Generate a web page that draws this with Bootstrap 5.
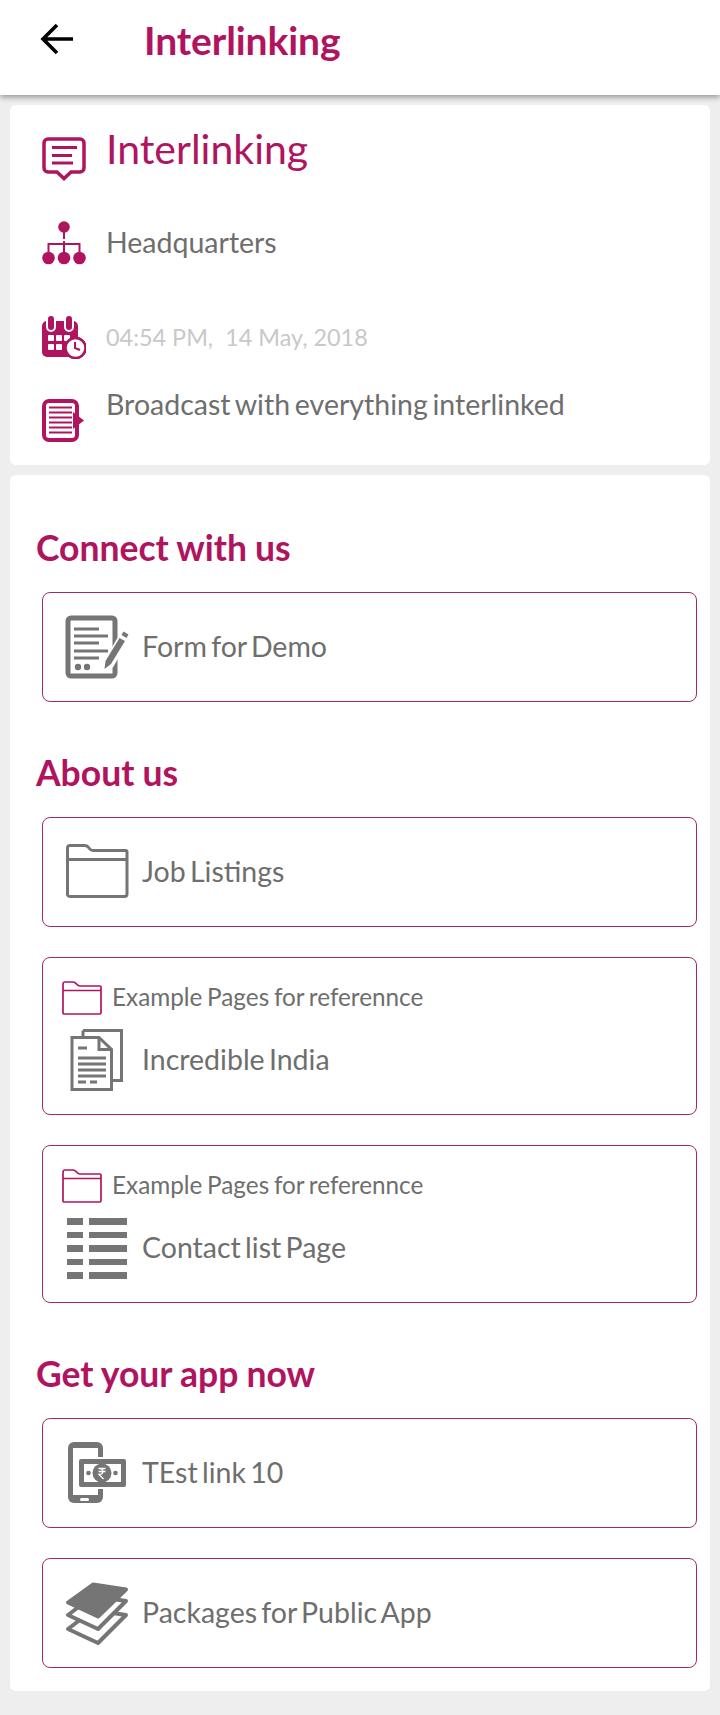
<!DOCTYPE html>
<html lang="en">
<head>
    <meta charset="UTF-8">
    <meta name="viewport" content="width=device-width, initial-scale=1.0">
    <title>Interlinking</title>
    <link href="https://cdn.jsdelivr.net/npm/bootstrap@5.3.0/dist/css/bootstrap.min.css" rel="stylesheet">
    <style>
        body { background-color: #eeeeee; font-family: Lato, "Liberation Sans", sans-serif; color: #6e6e6e; }
        .top-bar { height: 95px; background: #fff; box-shadow: 0 2px 6px rgba(0, 0, 0, .4); padding: 20px 0 0 39px; position: relative; }
        .top-title { font-size: 39px; font-weight: 700; color: #b0145f; margin-left: 67px; line-height: 40px; letter-spacing: -.1px; }
        .panel { background: #fff; border-radius: 6px; margin: 0 10px; }
        .panel-info { margin-top: 10px; height: 360px; padding: 24px 0 0 32px; }
        .panel-links { margin-top: 10px; padding: 53px 13px 23px 26px; }
        .info-text { margin-left: 20px; font-size: 28.5px; line-height: 40px; word-spacing: -2.5px; }
        .info-title { font-size: 41px; color: #b0145f; }
        .info-date { font-size: 23.4px; color: #c8c8c8; word-spacing: 0; }
        .row-title { height: 72px; }
        .row-org { height: 56px; margin-top: 14px; }
        .row-org .info-text { padding-bottom: 2px; }
        .row-date { height: 56px; margin-top: 38px; }
        .row-desc { margin-top: 19px; }
        .shift-8 { margin-top: 8px; }
        .shift-15 { margin-top: 15px; }
        .group-head { font-size: 35.5px; font-weight: 700; color: #b0145f; line-height: 40px; margin: 0 0 24px; word-spacing: -.5px; }
        .group-head-next { margin-top: 51px; }
        .link-box { --bs-border-color: #9e2a6a; border-radius: 8px; margin-left: 6px; background: #fff; color: #6e6e6e; font-size: 28.5px; line-height: 36px; word-spacing: -3px; padding-left: 12px; }
        .link-box + .link-box { margin-top: 30px; }
        .box-single { height: 110px; }
        .box-double { height: 158px; padding-top: 20px; }
        .crumb { height: 40px; margin-left: 7px; font-size: 24.3px; gap: 10px; word-spacing: -1.5px; }
        .crumb span { padding-bottom: 2px; }
        .crumb-next { margin-top: 11px; }
        .link-label { margin-left: 7px; padding-bottom: 2px; }
    </style>
</head>
<body>
    <div class="top-bar d-flex align-items-start">
        <svg width="38" height="38" viewBox="0 0 38 38" fill="none" stroke="#000" stroke-width="3.6"><path d="M34 19H5M18 5L4 19l14 14"/></svg>
        <div class="top-title">Interlinking</div>
    </div>

    <div class="panel panel-info">
        <div class="d-flex align-items-start row-title">
            <svg class="shift-8" width="44" height="44" viewBox="0 0 44 44" fill="none" stroke="#b0145f" stroke-width="3.500"><path d="M6 2h32a4 4 0 0 1 4 4v25a4 4 0 0 1-4 4h-9l-7 6.500-7-6.500H6a4 4 0 0 1-4-4V6a4 4 0 0 1 4-4z"/><path d="M10 10.500h25M10 18.500h20M10 26h21" stroke-width="3"/></svg>
            <div class="info-text info-title">Interlinking</div>
        </div>
        <div class="d-flex align-items-center row-org">
            <svg width="44" height="44" viewBox="0 0 44 44" fill="#b0145f" stroke="none"><circle cx="22" cy="6" r="5.800"/><circle cx="6.500" cy="37" r="6.300"/><circle cx="22" cy="37" r="6.300"/><circle cx="37.500" cy="37" r="6.300"/><path d="M22 11v7M6.500 31v-8h31v8M22 20v11" fill="none" stroke="#b0145f" stroke-width="2"/></svg>
            <div class="info-text">Headquarters</div>
        </div>
        <div class="d-flex align-items-center row-date">
            <svg width="44" height="44" viewBox="0 0 44 44"><rect x="0" y="6" width="36" height="36" rx="5" fill="#b0145f"/><g fill="#b0145f" stroke="#fff" stroke-width="2"><rect x="5" y="0" width="8" height="16" rx="4"/><rect x="23" y="0" width="8" height="16" rx="4"/></g><g fill="#fff"><rect x="6" y="20" width="6" height="6" rx="1"/><rect x="14" y="20" width="6" height="6" rx="1"/><rect x="22" y="20" width="6" height="6" rx="1"/><rect x="6" y="29" width="6" height="6" rx="1"/><rect x="14" y="29" width="6" height="6" rx="1"/></g><circle cx="33.500" cy="33" r="10" fill="#fff" stroke="#b0145f" stroke-width="2.500"/><circle cx="33.500" cy="33" r="10.800" fill="none" stroke="#b0145f" stroke-width="1"/><path d="M33 27v6l5 2" fill="none" stroke="#b0145f" stroke-width="2"/></svg>
            <div class="info-text info-date">04:54 PM,&nbsp; 14 May, 2018</div>
        </div>
        <div class="d-flex align-items-start row-desc">
            <svg class="shift-15" width="44" height="44" viewBox="0 0 44 44" fill="none" stroke="#b0145f"><rect x="2" y="2" width="33" height="39" rx="5" stroke-width="4"/><path d="M7 8.500h23M7 13.500h23M7 18.500h23M7 23.500h23M7 28.500h23M7 33.500h23" stroke-width="2"/><path d="M31 13l11 8.500-11 8.500z" fill="#b0145f" stroke="none"/></svg>
            <div class="info-text">Broadcast with everything interlinked</div>
        </div>
    </div>

    <div class="panel panel-links">
        <h2 class="group-head">Connect with us</h2>
        <div class="link-box box-single border d-flex align-items-center">
            <svg width="80" height="80" viewBox="0 2 80 80" fill="none" stroke="#757575"><rect x="13" y="13" width="47" height="58" rx="3" stroke-width="5"/><path d="M19 24h25M19 31h34M19 38h25M19 46h34M19 53h25" stroke-width="3"/><circle cx="23" cy="62" r="3.200" fill="#757575" stroke="none"/><circle cx="32" cy="62" r="3.200" fill="#757575" stroke="none"/><path d="M53 60l14-24" stroke="#fff" stroke-width="11"/><path d="M49.500 64l1-8 14-23 5.500 3-14 23z" fill="#757575" stroke="none"/><path d="M66.500 30l2-3.500 5 3-2 3.500z" fill="#757575" stroke="none"/></svg>
            <span class="link-label">Form for Demo</span>
        </div>

        <h2 class="group-head group-head-next">About us</h2>
        <div class="link-box box-single border d-flex align-items-center">
            <svg width="80" height="80" viewBox="0 0 80 80" fill="none" stroke="#757575" stroke-width="3"><path d="M12.500 63V16a2.500 2.500 0 0 1 2.500-2.500h15c2 0 3 1 4 2.500 1 1.500 2 2.500 4 2.500h32.500a1.500 1.500 0 0 1 1.500 1.500V62a2.500 2.500 0 0 1-2.500 2.500H15a2.500 2.500 0 0 1-2.500-1.500z"/><path d="M12.500 27.500h59"/></svg>
            <span class="link-label">Job Listings</span>
        </div>
        <div class="link-box box-double border">
            <div class="crumb d-flex align-items-center">
                <svg width="40" height="34" viewBox="0 0 40 34" fill="none" stroke="#b0145f" stroke-width="1.700"><path d="M1 31V3a2 2 0 0 1 2-2h8c2 0 2.500.7 3.500 2s1.500 2 3.500 2h20a1 1 0 0 1 1 1v25.500a1.500 1.500 0 0 1-1.500 1.500H2.500A1.500 1.500 0 0 1 1 31z"/><path d="M1 9.500h38"/></svg>
                <span>Example Pages for referennce</span>
            </div>
            <div class="crumb-next d-flex align-items-center">
                <svg width="80" height="62" viewBox="0 0 80 62" fill="none" stroke="#757575" stroke-width="3"><path d="M28 1.500h38.500v50H57"/><path d="M28 1.500v6"/><path d="M17 8.500h27l12.500 12V60.500H17z" fill="#fff"/><path d="M44 8.500v12h12.500"/><path d="M23 19h9M23 29h28M23 35h28M23 41h28M23 47h28M23 53h8M35 53h7"/></svg>
                <span class="link-label">Incredible India</span>
            </div>
        </div>
        <div class="link-box box-double border">
            <div class="crumb d-flex align-items-center">
                <svg width="40" height="34" viewBox="0 0 40 34" fill="none" stroke="#b0145f" stroke-width="1.700"><path d="M1 31V3a2 2 0 0 1 2-2h8c2 0 2.500.7 3.500 2s1.500 2 3.500 2h20a1 1 0 0 1 1 1v25.500a1.500 1.500 0 0 1-1.500 1.500H2.500A1.500 1.500 0 0 1 1 31z"/><path d="M1 9.500h38"/></svg>
                <span>Example Pages for referennce</span>
            </div>
            <div class="crumb-next d-flex align-items-center">
                <svg width="80" height="62" viewBox="0 0 80 62" fill="#757575"><rect x="12" y="1" width="16" height="7"/><rect x="34" y="1" width="38" height="7"/><rect x="12" y="15" width="16" height="6"/><rect x="34" y="15" width="38" height="6"/><rect x="12" y="28" width="16" height="7"/><rect x="34" y="28" width="38" height="7"/><rect x="12" y="42" width="16" height="6"/><rect x="34" y="42" width="38" height="6"/><rect x="12" y="55" width="16" height="7"/><rect x="34" y="55" width="38" height="7"/></svg>
                <span class="link-label">Contact list Page</span>
            </div>
        </div>

        <h2 class="group-head group-head-next">Get your app now</h2>
        <div class="link-box box-single border d-flex align-items-center">
            <svg width="80" height="80" viewBox="0 -2 80 80"><rect x="13" y="7" width="35" height="61" rx="6" fill="#757575"/><rect x="18" y="13" width="25" height="47" fill="#fff"/><rect x="25" y="63" width="9" height="3" rx="1.500" fill="#fff"/><rect x="22" y="22" width="51" height="32" fill="#fff"/><rect x="24" y="24" width="47" height="28" rx="2" fill="#757575"/><rect x="29" y="29" width="37" height="18" fill="#fff"/><circle cx="47" cy="38" r="9.500" fill="#757575"/><circle cx="33.500" cy="38" r="2.300" fill="#757575"/><circle cx="60.500" cy="38" r="2.300" fill="#757575"/><path d="M43.500 33.500h7M43.500 36.500h7M45 33.500c4 0 4 6-1 6l4.500 4.500" fill="none" stroke="#fff" stroke-width="1.300"/></svg>
            <span class="link-label">TEst link 10</span>
        </div>
        <div class="link-box box-single border d-flex align-items-center">
            <svg width="80" height="80" viewBox="0 -2 80 80" stroke="#757575" stroke-width="4" stroke-linejoin="round"><path d="M38 35l33 5-28 28-30-14z" fill="#fff"/><path d="M38 21l33 5-28 28-30-14z" fill="#fff"/><path d="M38 9.500l33 5-28 27-30-14z" fill="#757575"/></svg>
            <span class="link-label">Packages for Public App</span>
        </div>
    </div>

    <script src="https://cdn.jsdelivr.net/npm/bootstrap@5.3.0/dist/js/bootstrap.bundle.min.js"></script>
</body>
</html>
